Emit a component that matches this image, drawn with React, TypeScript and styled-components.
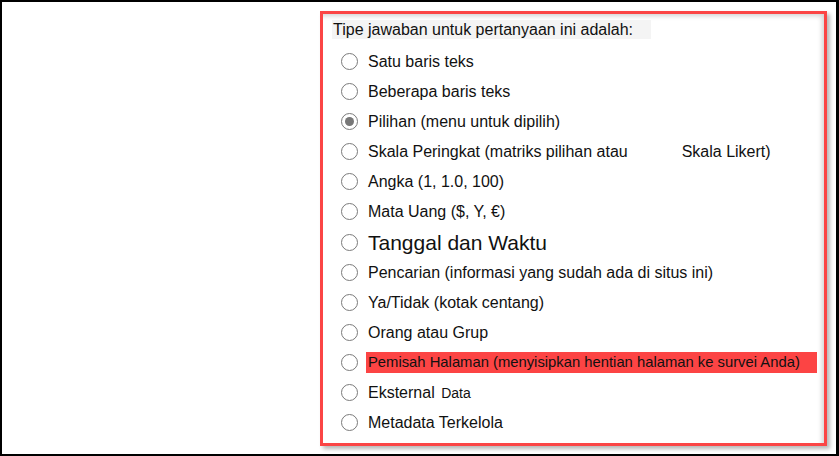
import React from "react";
import styled, { createGlobalStyle } from "styled-components";

const Global = createGlobalStyle`
  html, body { margin: 0; padding: 0; background: #fff; }
  body { font-family: "Liberation Sans", Arial, sans-serif; }
`;

const Frame = styled.div`
  box-sizing: border-box;
  width: 839px;
  height: 456px;
  border-style: solid;
  border-color: #000;
  border-width: 2px 3px 2px 2px;
  background: #fff;
  padding: 9px 0 0 318px;
  overflow: hidden;
`;

const Panel = styled.div`
  box-sizing: border-box;
  width: 507px;
  height: 435px;
  border: 3px solid #fb4545;
  box-shadow: 3px 3px 4px rgba(0, 0, 0, 0.28), inset -4px 4px 5px -2px rgba(0, 0, 0, 0.18);
  padding: 6px 0 0 9px;
  display: flex;
  flex-direction: column;
  color: #111;
`;

const Title = styled.div`
  align-self: flex-start;
  background: #f4f4f4;
  height: 19px;
  width: 319px;
  font-size: 16px;
  line-height: 19px;
  padding-left: 1px;
  margin-bottom: 7px;
  box-sizing: border-box;
  white-space: nowrap;
`;

const List = styled.div`
  display: flex;
  flex-direction: column;
  padding-left: 9px;
`;

const Row = styled.label`
  display: flex;
  align-items: center;
  height: 30.17px;
  gap: 10px;
  white-space: nowrap;
`;

const Radio = styled.span<{ $checked?: boolean }>`
  box-sizing: border-box;
  flex: none;
  width: 17px;
  height: 17px;
  border-radius: 50%;
  border: 1.6px solid #7a7a7a;
  display: flex;
  align-items: center;
  justify-content: center;
  background: #fff;
  &::after {
    content: "";
    display: ${(p) => (p.$checked ? "block" : "none")};
    width: 9px;
    height: 9px;
    border-radius: 50%;
    background: #777;
  }
`;

const Label = styled.span<{ $size?: number; $highlight?: boolean }>`
  font-size: ${(p) => p.$size ?? 16}px;
  line-height: 21px;
  background: ${(p) => (p.$highlight ? "#fc4444" : "transparent")};
  width: ${(p) => (p.$highlight ? "451px" : "auto")};
  margin-left: ${(p) => (p.$highlight ? "-2px" : "0")};
  padding-left: ${(p) => (p.$highlight ? "2px" : "0")};
  box-sizing: border-box;
`;

const Gap = styled.span<{ $w: number }>`
  display: inline-block;
  width: ${(p) => p.$w}px;
`;

const Small = styled.span`
  font-size: 14px;
  margin-left: 2px;
`;

type Item = { key: string; content: React.ReactNode; checked?: boolean; size?: number; highlight?: boolean };

const items: Item[] = [
  { key: "a", content: "Satu baris teks" },
  { key: "b", content: "Beberapa baris teks" },
  { key: "c", content: "Pilihan (menu untuk dipilih)", checked: true },
  {
    key: "d",
    content: (
      <>
        Skala Peringkat (matriks pilihan atau<Gap $w={54} />Skala Likert)
      </>
    ),
  },
  { key: "e", content: "Angka (1, 1.0, 100)" },
  { key: "f", content: "Mata Uang ($, Y, €)" },
  { key: "g", content: "Tanggal dan Waktu", size: 21 },
  { key: "h", content: "Pencarian (informasi yang sudah ada di situs ini)" },
  { key: "i", content: "Ya/Tidak (kotak centang)" },
  { key: "j", content: "Orang atau Grup" },
  { key: "k", content: "Pemisah Halaman (menyisipkan hentian halaman ke survei Anda)", highlight: true, size: 14.8 },
  {
    key: "l",
    content: (
      <>
        Eksternal <Small>Data</Small>
      </>
    ),
  },
  { key: "m", content: "Metadata Terkelola" },
];

export default function App() {
  return (
    <>
      <Global />
      <Frame>
        <Panel>
          <Title>Tipe jawaban untuk pertanyaan ini adalah:</Title>
          <List>
            {items.map((it) => (
              <Row key={it.key}>
                <Radio $checked={it.checked} />
                <Label $size={it.size} $highlight={it.highlight}>
                  {it.content}
                </Label>
              </Row>
            ))}
          </List>
        </Panel>
      </Frame>
    </>
  );
}
